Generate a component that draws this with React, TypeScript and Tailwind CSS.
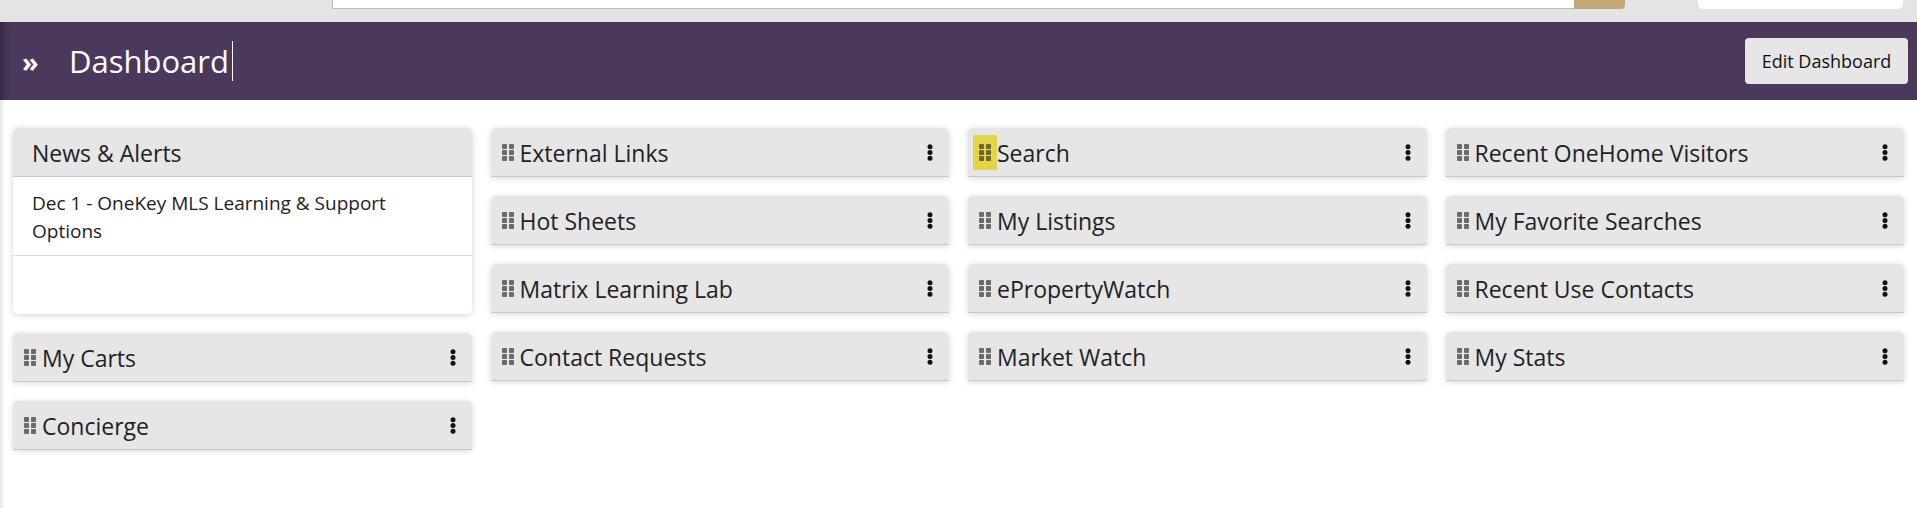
import React from "react";

const font = { fontFamily: '"Open Sans", "Noto Sans", sans-serif' };

function Handle({ highlight = false }: { highlight?: boolean }) {
  return (
    <span
      className={
        "flex h-[35px] w-[24px] shrink-0 items-center justify-center " +
        (highlight ? "bg-[#e4d44c]" : "")
      }
    >
      <svg width="12" height="17" viewBox="0 0 12 17" aria-hidden="true">
        {[0, 6, 12].map((y) =>
          [0, 7].map((x) => (
            <rect
              key={`${x}-${y}`}
              x={x}
              y={y}
              width="5"
              height="5"
              rx="1"
              fill={highlight ? "#6e6934" : "#6a6a6a"}
            />
          ))
        )}
      </svg>
    </span>
  );
}

function Kebab() {
  return (
    <svg width="6" height="17" viewBox="0 0 6 17" aria-hidden="true" className="shrink-0">
      <circle cx="3" cy="2.7" r="2.5" fill="#111" />
      <circle cx="3" cy="8.5" r="2.5" fill="#111" />
      <circle cx="3" cy="14.3" r="2.5" fill="#111" />
    </svg>
  );
}

function Widget({ title, highlight = false }: { title: string; highlight?: boolean }) {
  return (
    <div className="flex h-[49px] items-center rounded-t-[5px] border-b border-[#c9c9c9] bg-[#e6e6e6] pl-[5px] pr-[16px] shadow-[0_1px_6px_rgba(0,0,0,0.16)]">
      <Handle highlight={highlight} />
      <span className="flex-1 pt-[2px] text-[23px] leading-none text-[#222]">{title}</span>
      <Kebab />
    </div>
  );
}

export default function App() {
  const col2 = ["External Links", "Hot Sheets", "Matrix Learning Lab", "Contact Requests"];
  const col3 = ["Search", "My Listings", "ePropertyWatch", "Market Watch"];
  const col4 = ["Recent OneHome Visitors", "My Favorite Searches", "Recent Use Contacts", "My Stats"];

  return (
    <div className="h-[508px] w-[1917px] overflow-hidden bg-white" style={font}>
      {/* top strip */}
      <div className="flex h-[22px] items-start bg-[#e4e4e4]">
        <div className="ml-[332px] h-[9px] w-[1242px] border-b border-l border-[#bcbcbc] bg-white" />
        <div className="h-[9px] w-[51px] rounded-br-[4px] bg-[#c5a879]" />
        <div className="ml-[73px] h-[9px] w-[205px] rounded-b-[5px] bg-white" />
      </div>

      {/* purple header */}
      <div className="flex h-[78px] items-center bg-[#4a395d] pr-[9px] shadow-[inset_9px_0_7px_-6px_rgba(0,0,0,0.35)]">
        <span className="ml-[22px] w-[47px] text-[27px] font-bold leading-none text-white">»</span>
        <span className="text-[31px] leading-none text-white">Dashboard</span>
        <span className="ml-[3px] h-[40px] w-px bg-white" />
        <div className="flex-1" />
        <button className="h-[46px] w-[163px] rounded-[4px] bg-[#e6e6e6] text-[18px] text-[#111]">
          Edit Dashboard
        </button>
      </div>

      {/* content */}
      <div className="grid h-[408px] grid-cols-4 gap-x-[19px] px-[13px] pt-[28px] shadow-[inset_5px_0_4px_-3px_rgba(0,0,0,0.12)]">
        <div className="flex flex-col gap-[19px]">
          <div className="rounded-[5px] bg-white shadow-[0_1px_6px_rgba(0,0,0,0.18)]">
            <div className="flex h-[49px] items-center rounded-t-[5px] border-b border-[#c9c9c9] bg-[#e6e6e6] pl-[19px] pt-[2px] text-[23px] leading-none text-[#222]">
              News &amp; Alerts
            </div>
            <div className="border-b border-[#dcdcdc] pb-[10px] pl-[19px] pr-[24px] pt-[12px] text-[19px] leading-[28px] text-[#222]">
              Dec 1 - OneKey MLS Learning &amp; Support Options
            </div>
            <div className="h-[58px]" />
          </div>
          <Widget title="My Carts" />
          <Widget title="Concierge" />
        </div>
        <div className="flex flex-col gap-[19px]">
          {col2.map((t) => (
            <Widget key={t} title={t} />
          ))}
        </div>
        <div className="flex flex-col gap-[19px]">
          {col3.map((t, i) => (
            <Widget key={t} title={t} highlight={i === 0} />
          ))}
        </div>
        <div className="flex flex-col gap-[19px]">
          {col4.map((t) => (
            <Widget key={t} title={t} />
          ))}
        </div>
      </div>
    </div>
  );
}
